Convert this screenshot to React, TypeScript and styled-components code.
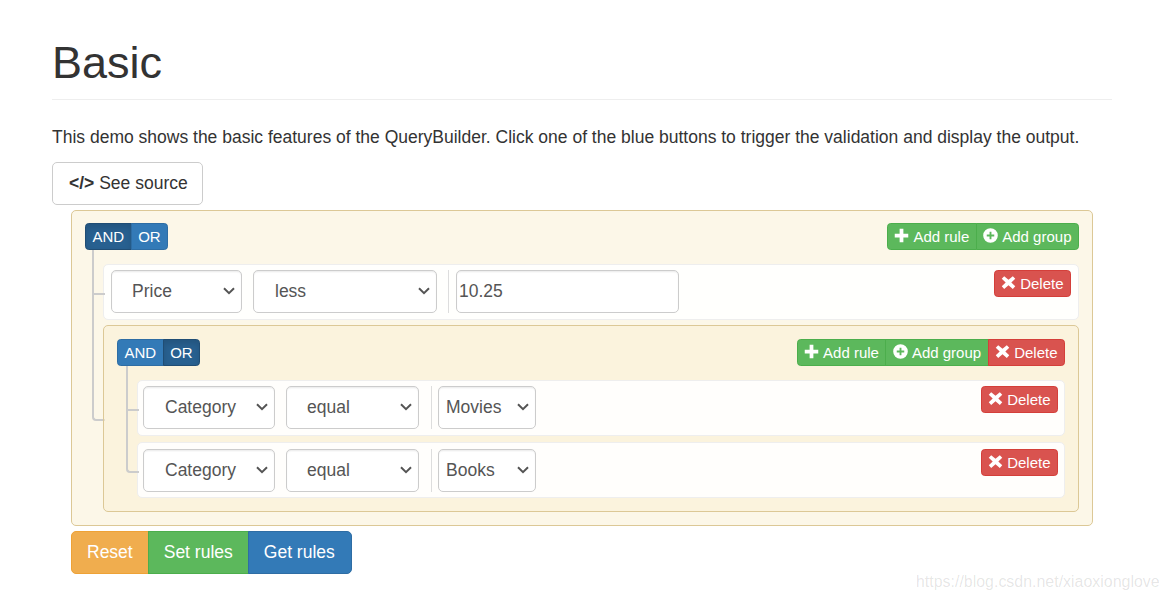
import * as React from 'react'
import styled, { createGlobalStyle, css } from 'styled-components'

const GlobalStyle = createGlobalStyle`
  * {
    box-sizing: border-box;
  }
  html,
  body {
    margin: 0;
    background: #fff;
  }
  body {
    font-family: 'Liberation Sans', Arial, sans-serif;
    font-size: 17.5px;
    line-height: 25px;
    color: #333;
  }
`

const chevron =
  "url(\"data:image/svg+xml,%3Csvg xmlns='http://www.w3.org/2000/svg' width='12' height='8' viewBox='0 0 12 8'%3E%3Cpath d='M1 1.2l5 5 5-5' fill='none' stroke='%23555' stroke-width='2'/%3E%3C/svg%3E\")"

const Page = styled.div`
  position: relative;
  width: 1169px;
  height: 599px;
  padding: 38px 57px 0 52px;
  overflow: hidden;
`

const Title = styled.h1`
  margin: 0;
  padding-bottom: 11.25px;
  border-bottom: 1.25px solid #eee;
  font-size: 45px;
  font-weight: 500;
  line-height: 49.5px;
`

const Lead = styled.p`
  margin: 25.5px 0 11.5px;
`

const SourceButton = styled.button`
  display: block;
  height: 43px;
  padding: 0 14px 0 16px;
  border: 1px solid #ccc;
  border-radius: 5px;
  background: #fff;
  color: #333;
  font: inherit;
  b {
    font-weight: 700;
  }
`

const Builder = styled.div`
  margin: 5px 19px 0;
`

const Group = styled.div<{ $nested?: boolean }>`
  position: relative;
  padding: ${({ $nested }) => ($nested ? 13 : 12)}px 13px 13px;
  border: 1px solid #dcc896;
  border-radius: 5px;
  background: rgba(250, 240, 210, 0.5);
`

const GroupHeader = styled.div`
  display: flex;
  justify-content: space-between;
  align-items: flex-start;
  margin-bottom: 14px;
`

const ButtonGroup = styled.div`
  display: flex;
  & > button + button {
    margin-left: -1px;
  }
  & > button:first-child {
    border-top-left-radius: 3.75px;
    border-bottom-left-radius: 3.75px;
  }
  & > button:last-child {
    border-top-right-radius: 3.75px;
    border-bottom-right-radius: 3.75px;
  }
`

const tones = {
  primary: css`
    background: #337ab7;
    border-color: #2e6da4;
  `,
  active: css`
    background: #286090;
    border-color: #204d74;
    box-shadow: inset 0 3.75px 6px rgba(0, 0, 0, 0.125);
  `,
  success: css`
    background: #5cb85c;
    border-color: #4cae4c;
  `,
  danger: css`
    background: #d9534f;
    border-color: #d43f3a;
  `,
  warning: css`
    background: #f0ad4e;
    border-color: #eea236;
  `,
}

type Tone = keyof typeof tones

const SmallButton = styled.button<{ $tone: Tone }>`
  display: inline-flex;
  align-items: center;
  gap: 4px;
  height: 27px;
  padding: 1px 6.5px 0;
  border: 1px solid;
  border-radius: 0;
  color: #fff;
  font: inherit;
  font-size: 15px;
  line-height: 22px;
  ${({ $tone }) => tones[$tone]}
`

const LargeButton = styled.button<{ $tone: Tone }>`
  height: 43px;
  padding: 0 15px;
  border: 1px solid;
  border-radius: 0;
  color: #fff;
  font: inherit;
  ${({ $tone }) => tones[$tone]}
`

const Footer = styled(ButtonGroup)`
  margin-top: 5px;
  & > button:first-child {
    border-top-left-radius: 5px;
    border-bottom-left-radius: 5px;
  }
  & > button:last-child {
    padding-right: 16px;
    border-top-right-radius: 5px;
    border-bottom-right-radius: 5px;
  }
`

const List = styled.div<{ $indent: number; $gap: number }>`
  display: flex;
  flex-direction: column;
  gap: ${({ $gap }) => $gap}px;
  margin-left: ${({ $indent }) => $indent}px;
`

const Item = styled.div`
  position: relative;
  &::before,
  &::after {
    content: '';
    position: absolute;
    left: -11px;
    width: 11px;
    border: 0 solid #ccc;
    border-left-width: 2px;
  }
  &::before {
    top: -14px;
    height: calc(50% + 15px);
    border-bottom-width: 2px;
  }
  &::after {
    top: 50%;
    height: calc(50% + 8px);
  }
  &:last-child::before {
    border-bottom-left-radius: 4px;
  }
  &:last-child::after {
    display: none;
  }
`

const Rule = styled.div<{ $height: number; $top: number; $left: number; $right: number }>`
  display: flex;
  justify-content: space-between;
  align-items: flex-start;
  height: ${({ $height }) => $height}px;
  padding: ${({ $top }) => $top}px ${({ $right }) => $right}px 0 ${({ $left }) => $left}px;
  border: 1px solid #eee;
  border-radius: 5px;
  background: rgba(255, 255, 255, 0.9);
`

const RuleFields = styled.div`
  display: flex;
  align-items: stretch;
`

const Select = styled.select<{ $width: number; $inset: number }>`
  appearance: none;
  width: ${({ $width }) => $width}px;
  height: 43px;
  margin-right: 11px;
  padding: 0 0 0 ${({ $inset }) => $inset}px;
  border: 1px solid #ccc;
  border-radius: 5px;
  background: #fff ${chevron} no-repeat right 6px center;
  box-shadow: inset 0 1.25px 1.25px rgba(0, 0, 0, 0.075);
  color: #555;
  font: inherit;
`

const ValueCell = styled.div<{ $left: number }>`
  display: flex;
  margin-left: ${({ $left }) => $left}px;
  padding-left: ${({ $left }) => 7 - $left}px;
  border-left: 1px solid #ddd;
`

const ValueSelect = styled(Select)`
  margin-right: 0;
`

const ValueInput = styled.input`
  width: 223px;
  height: 43px;
  padding: 0 2px;
  border: 1px solid #ccc;
  border-radius: 5px;
  background: #fff;
  box-shadow: inset 0 1.25px 1.25px rgba(0, 0, 0, 0.075);
  color: #555;
  font: inherit;
`

const Watermark = styled.div`
  position: absolute;
  left: 916px;
  top: 569px;
  color: rgba(0, 0, 0, 0.11);
  font-size: 15.95px;
  white-space: nowrap;
`

const Icon = styled.svg`
  flex: none;
  width: 15px;
  height: 15px;
  margin-top: -3px;
  fill: currentColor;
`

const PlusIcon = () => (
  <Icon viewBox="0 0 16 16">
    <path d="M6 .8h4v5.2h5.2v4H10v5.2H6V10H.8V6H6z" />
  </Icon>
)

const PlusSignIcon = () => (
  <Icon viewBox="0 0 16 16">
    <path
      fillRule="evenodd"
      d="M8 .2a7.8 7.8 0 1 1 0 15.6A7.8 7.8 0 0 1 8 .2zM7 4v3H4v2h3v3h2V9h3V7H9V4z"
    />
  </Icon>
)

const RemoveIcon = () => (
  <Icon viewBox="0 0 16 16">
    <path d="M3.4 1.2 8 5.1l4.6-3.9 2.6 2.7L11 8l4.2 4.1-2.6 2.7L8 10.9l-4.6 3.9-2.6-2.7L5 8 .8 3.9z" />
  </Icon>
)

const Option = ({ value }: { value: string }) => <option value={value}>{value}</option>

const Condition = ({ and }: { and: boolean }) => (
  <ButtonGroup>
    <SmallButton $tone={and ? 'active' : 'primary'}>AND</SmallButton>
    <SmallButton $tone={and ? 'primary' : 'active'}>OR</SmallButton>
  </ButtonGroup>
)

const AddButtons = () => (
  <>
    <SmallButton $tone="success">
      <PlusIcon />
      Add rule
    </SmallButton>
    <SmallButton $tone="success">
      <PlusSignIcon />
      Add group
    </SmallButton>
  </>
)

const DeleteButton = () => (
  <SmallButton $tone="danger">
    <RemoveIcon />
    Delete
  </SmallButton>
)

const CategoryRule = ({ value, top }: { value: string; top: number }) => (
  <Item>
    <Rule $height={56} $top={top} $left={5} $right={6}>
      <RuleFields>
        <Select $width={132} $inset={21} defaultValue="Category">
          <Option value="Category" />
        </Select>
        <Select $width={133} $inset={20} defaultValue="equal">
          <Option value="equal" />
        </Select>
        <ValueCell $left={1}>
          <ValueSelect $width={98} $inset={7} defaultValue={value}>
            <Option value={value} />
          </ValueSelect>
        </ValueCell>
      </RuleFields>
      <ButtonGroup>
        <DeleteButton />
      </ButtonGroup>
    </Rule>
  </Item>
)

export default function App() {
  return (
    <Page>
      <GlobalStyle />
      <Title>Basic</Title>
      <Lead>
        This demo shows the basic features of the QueryBuilder. Click one of the blue buttons to
        trigger the validation and display the output.
      </Lead>
      <SourceButton>
        <b>&lt;/&gt;</b> See source
      </SourceButton>
      <Builder>
        <Group>
          <GroupHeader>
            <Condition and />
            <ButtonGroup>
              <AddButtons />
            </ButtonGroup>
          </GroupHeader>
          <List $indent={18} $gap={5}>
            <Item>
              <Rule $height={56} $top={5} $left={7} $right={7}>
                <RuleFields>
                  <Select $width={131} $inset={20} defaultValue="Price">
                    <Option value="Price" />
                  </Select>
                  <Select $width={184} $inset={21} defaultValue="less">
                    <Option value="less" />
                  </Select>
                  <ValueCell $left={0}>
                    <ValueInput defaultValue="10.25" />
                  </ValueCell>
                </RuleFields>
                <ButtonGroup>
                  <DeleteButton />
                </ButtonGroup>
              </Rule>
            </Item>
            <Item>
              <Group $nested>
                <GroupHeader>
                  <Condition and={false} />
                  <ButtonGroup>
                    <AddButtons />
                    <DeleteButton />
                  </ButtonGroup>
                </GroupHeader>
                <List $indent={20} $gap={6}>
                  <CategoryRule value="Movies" top={5} />
                  <CategoryRule value="Books" top={6} />
                </List>
              </Group>
            </Item>
          </List>
        </Group>
        <Footer>
          <LargeButton $tone="warning">Reset</LargeButton>
          <LargeButton $tone="success">Set rules</LargeButton>
          <LargeButton $tone="primary">Get rules</LargeButton>
        </Footer>
      </Builder>
      <Watermark>https://blog.csdn.net/xiaoxionglove</Watermark>
    </Page>
  )
}
